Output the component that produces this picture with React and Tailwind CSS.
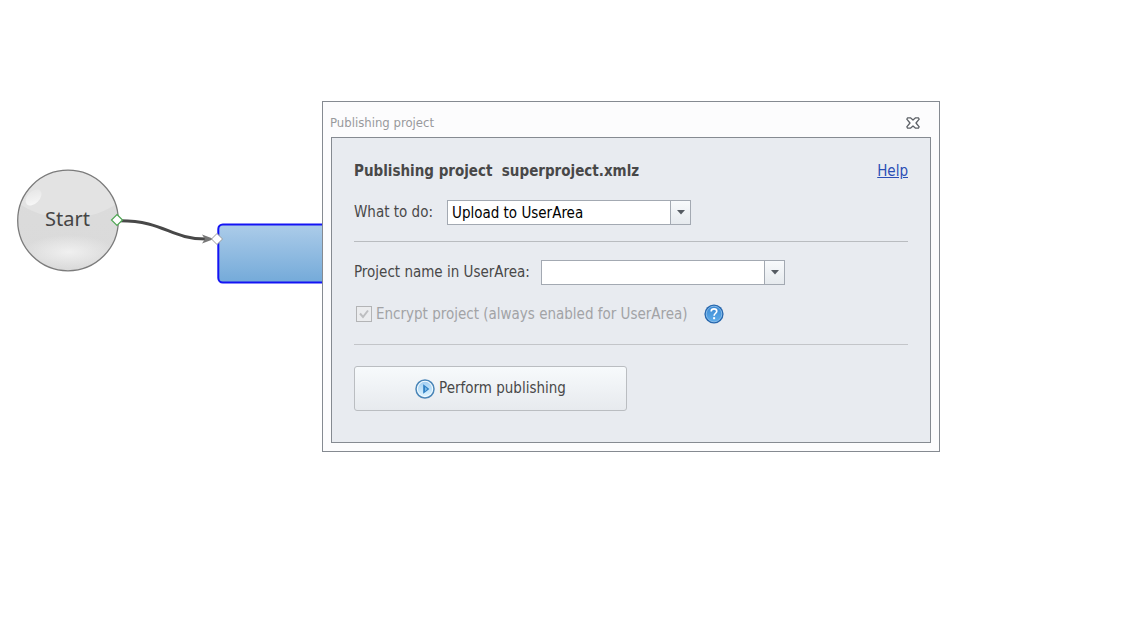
import React from "react";

function ComboBox({ id, value, options }) {
  return (
    <div className="relative h-[25px] w-[244px] border border-[#a3a9b2] bg-white">
      <select
        id={id}
        defaultValue={value}
        className="h-full w-full appearance-none bg-transparent pl-1 pr-6 text-[15px] leading-[22px] text-black outline-none"
      >
        {options.map((option) => (
          <option key={option} value={option}>
            {option}
          </option>
        ))}
      </select>
      <span className="pointer-events-none absolute inset-y-0 right-0 flex w-5 items-center justify-center border-l border-[#a3a9b2] bg-linear-to-b from-[#f8fafc] to-[#e6eaee]">
        <svg width="8" height="5" viewBox="0 0 8 5" aria-hidden="true">
          <path d="M0 0H8L4 4.5Z" fill="#555b62" />
        </svg>
      </span>
    </div>
  );
}

function CloseIcon() {
  return (
    <svg width="14" height="12" viewBox="0 0 14 12" fill="#fff" stroke="#5c6066" strokeWidth="1.3" strokeLinejoin="round" aria-hidden="true">
      <path d="M1.600 .8H4.400L7 3 9.600 .8H12.400L13.200 2.200 10 6 13.200 9.800 12.400 11.200H9.600L7 9 4.400 11.200H1.600L.8 9.800 4 6 .8 2.200Z" />
    </svg>
  );
}

function HelpIcon() {
  return (
    <svg width="20" height="20" viewBox="0 0 20 20" aria-hidden="true">
      <defs>
        <linearGradient id="helpFill" x1="0" y1="0" x2="0" y2="1">
          <stop offset="0" stopColor="#3a87d2" />
          <stop offset="1" stopColor="#5fadea" />
        </linearGradient>
      </defs>
      <circle cx="10" cy="10" r="9.6" fill="#2767ad" />
      <circle cx="10" cy="10" r="7.8" fill="url(#helpFill)" stroke="#8fc1ec" strokeWidth=".9" />
      <path d="M7.2 7.4C7.2 5.8 8.4 4.9 10 4.9S12.8 5.8 12.8 7.3C12.8 9.2 10.1 9.4 10.1 11.8" fill="none" stroke="#fff" strokeWidth="1.6" />
      <rect x="9.1" y="13.2" width="2" height="2" fill="#fff" />
    </svg>
  );
}

function PlayIcon() {
  return (
    <svg width="20" height="20" viewBox="0 0 20 20" aria-hidden="true">
      <defs>
        <linearGradient id="playFill" x1="0" y1="0" x2="0" y2="1">
          <stop offset="0" stopColor="#a3cff2" />
          <stop offset="1" stopColor="#dcf4ff" />
        </linearGradient>
      </defs>
      <circle cx="10" cy="10" r="9" fill="#f4fbff" stroke="#4a86b8" strokeWidth="1.5" />
      <circle cx="10" cy="10" r="7.2" fill="url(#playFill)" />
      <path d="M8.2 5.2V14.8L14.4 10Z" fill="#2f80c4" />
      <path d="M10 8V12.2L12.4 10Z" fill="#7ab8e6" />
    </svg>
  );
}

function Diagram() {
  return (
    <svg className="absolute left-0 top-[160px]" width="640" height="130" viewBox="0 160 640 130" role="img" aria-label="Start node linked to the next block">
      <defs>
        <linearGradient id="blockFill" x1="0" y1="0" x2="0" y2="1">
          <stop offset="0" stopColor="#accce9" />
          <stop offset="1" stopColor="#74aad9" />
        </linearGradient>
        <linearGradient id="ballFill" x1="0" y1="0" x2="0" y2="1">
          <stop offset="0" stopColor="#dcdcdc" />
          <stop offset="1" stopColor="#dadada" />
        </linearGradient>
        <radialGradient id="ballGlow">
          <stop offset="0" stopColor="#f0f0f0" />
          <stop offset="1" stopColor="#f0f0f0" stopOpacity="0" />
        </radialGradient>
        <linearGradient id="spot" x1="0" y1="1" x2="1" y2="0">
          <stop offset="0" stopColor="#fbfbfb" />
          <stop offset="1" stopColor="#f4f4f4" stopOpacity=".15" />
        </linearGradient>
        <clipPath id="ballClip">
          <circle cx="68" cy="220.5" r="50" />
        </clipPath>
      </defs>
      <circle cx="68" cy="220.5" r="50.3" fill="url(#ballFill)" />
      <g clipPath="url(#ballClip)">
        <ellipse cx="68" cy="180" rx="62" ry="38" fill="#e3e3e3" />
        <ellipse cx="69" cy="252" rx="46" ry="17" fill="url(#ballGlow)" />
      </g>
      <ellipse cx="33.500" cy="197.500" rx="9.500" ry="6" transform="rotate(45 33.5 197.5) rotate(-90 33.5 197.5)" fill="url(#spot)" />
      <circle cx="68" cy="220.5" r="50.3" fill="none" stroke="#7b7b7b" strokeWidth="1.3" />
      <text x="67.500" y="226" textAnchor="middle" fill="#454545" fontSize="20" fontFamily="'Noto Sans', sans-serif">
        Start
      </text>
      <rect x="218.300" y="224.500" width="400" height="58" rx="4.500" fill="url(#blockFill)" stroke="#1414f4" strokeWidth="2" />
      <path d="M120 220.8C165 221 170 239 206 239" fill="none" stroke="#484848" strokeWidth="3" />
      <path d="M202 234.500L214 239 202 243.500 205 239Z" fill="#777" />
      <path d="M117 214.500L122.500 220 117 225.500 111.500 220Z" fill="#fff" stroke="#4fa653" strokeWidth="1.2" />
      <path d="M217 233.500L222.500 239 217 244.500 211.500 239Z" fill="#fff" stroke="#9a9a9a" strokeWidth="1" />
    </svg>
  );
}

export default function App() {
  return (
    <main className="relative min-h-screen overflow-hidden bg-white font-['DejaVu_Sans_Condensed','DejaVu_Sans',sans-serif] text-[15px] text-[#484848]">
      <Diagram />
      <section
        role="dialog"
        aria-labelledby="dialog-title"
        className="absolute left-[322px] top-[101px] w-[618px] border border-[#858a91] bg-[#fcfcfd] px-2 pb-2"
      >
        <header className="flex h-[35px] items-center justify-between pr-[11px] pt-[7px]">
          <h1 id="dialog-title" className="-ml-px text-[13px] leading-5 text-[#98999c]">
            Publishing project
          </h1>
          <button type="button" aria-label="Close">
            <CloseIcon />
          </button>
        </header>
        <form className="border border-[#858a91] bg-[#e8ebf0] px-[22px] pb-[31px] pt-[21px]">
          <div className="flex h-6 items-center justify-between">
            <h2 className="font-bold">Publishing project&nbsp; superproject.xmlz</h2>
            <a href="#help" className="text-[#2b4eb5] underline">
              Help
            </a>
          </div>
          <div className="mt-[17px] flex items-center gap-2">
            <label htmlFor="action" className="min-w-[85px]">What to do:</label>
            <ComboBox id="action" value="Upload to UserArea" options={["Upload to UserArea"]} />
          </div>
          <hr className="mt-4 border-t border-[#b9bcc0]" />
          <div className="mt-[18px] flex items-center gap-2">
            <label htmlFor="project" className="min-w-[179px]">Project name in UserArea:</label>
            <ComboBox id="project" value="" options={[""]} />
          </div>
          <div className="mt-[18px] flex h-[22px] items-center">
            <span className="relative flex h-4 w-[18px]">
              <input
                id="encrypt"
                type="checkbox"
                defaultChecked
                disabled
                className="ml-[2px] h-4 w-4 appearance-none border border-[#b3b4b6] bg-[#ebecee]"
              />
              <svg className="pointer-events-none absolute left-[2px] top-0" width="16" height="16" viewBox="0 0 16 16" aria-hidden="true">
                <path d="M4 7.500L7 11 12 4.500" fill="none" stroke="#bdbec0" strokeWidth="2" />
              </svg>
            </span>
            <label htmlFor="encrypt" className="ml-1 min-w-[318px] text-[#a2a3a6]">
              Encrypt project (always enabled for UserArea)
            </label>
            <button type="button" aria-label="About encryption" className="ml-[10px]">
              <HelpIcon />
            </button>
          </div>
          <hr className="mt-[19px] border-t border-[#c3c5c9]" />
          <button
            type="button"
            className="mt-[21px] flex h-[45px] w-[273px] items-center justify-center gap-1 rounded-[3px] border border-[#babdc1] bg-linear-to-b from-[#f7fafc] to-[#e7eaee]"
          >
            <PlayIcon />
            Perform publishing
          </button>
        </form>
      </section>
    </main>
  );
}
